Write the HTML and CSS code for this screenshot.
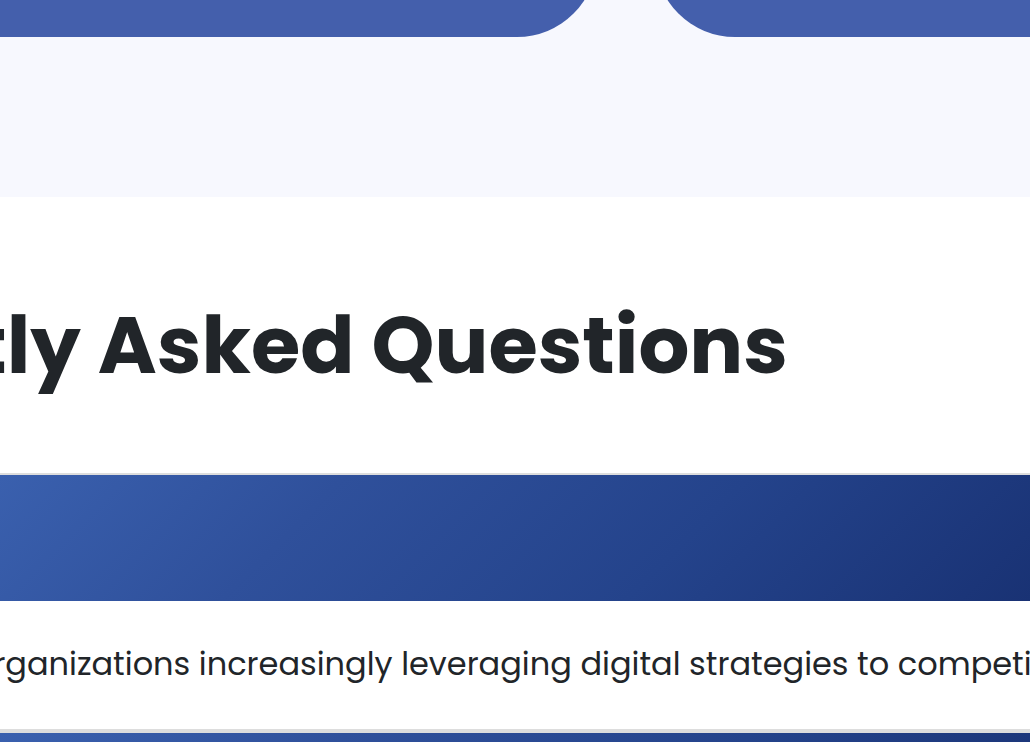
FILE: index.html
```html
<!DOCTYPE html>
<html lang="en">
<head>
<meta charset="utf-8">
<meta name="viewport" content="width=device-width, initial-scale=1">
<link rel="stylesheet" href="styles.css">
</head>
<body>
<section class="cards">
  <div class="cards-row">
    <div class="card card-left"></div>
    <div class="card card-right"></div>
  </div>
</section>
<main class="faq">
  <h2 class="faq-title">tly Asked Questions</h2>
  <div class="faq-item">
    <div class="faq-bar"></div>
    <p class="faq-answer">rganizations increasingly leveraging digital strategies to competi</p>
  </div>
  <div class="faq-item">
    <div class="faq-bar"></div>
  </div>
</main>
</body>
</html>
```
FILE: styles.css
```css
* { box-sizing: border-box; }

body {
  margin: 0;
  height: 100vh;
  display: flex;
  flex-direction: column;
  overflow: hidden;
  background: #fff;
  color: #212529;
  font-family: Poppins, Inter, "Open Sans", sans-serif;
}

.cards {
  flex: none;
  padding-bottom: 160px;
  background: #f7f8fe;
}

.cards-row {
  display: grid;
  grid-template-columns: 597fr 375fr;
  grid-template-rows: 100%;
  align-items: end;
  gap: 58px;
  height: 37px;
  overflow: hidden;
}

.card {
  height: 160px;
  background: #445fac;
}

.card-left { border-bottom-right-radius: 80px; }
.card-right { border-bottom-left-radius: 80px; }

.faq {
  flex: none;
  padding-top: 100px;
}

.faq-title {
  display: flex;
  justify-content: flex-end;
  width: 76.5%;
  margin: 0 0 80px;
  font-size: 80px;
  font-weight: 700;
  line-height: 96px;
  white-space: nowrap;
}

.faq-item {
  border-top: 2px solid #ddd;
  border-bottom: 2px solid #ddd;
}

.faq-bar {
  height: 126px;
  background: linear-gradient(135deg, #3a60ae 0%, #2f509b 30%, #24438b 65%, #193274 100%);
}

.faq-answer {
  display: flex;
  justify-content: center;
  margin: 0;
  padding: 39px 5px 41px 0;
  font-size: 32px;
  line-height: 48px;
  white-space: nowrap;
}
```
